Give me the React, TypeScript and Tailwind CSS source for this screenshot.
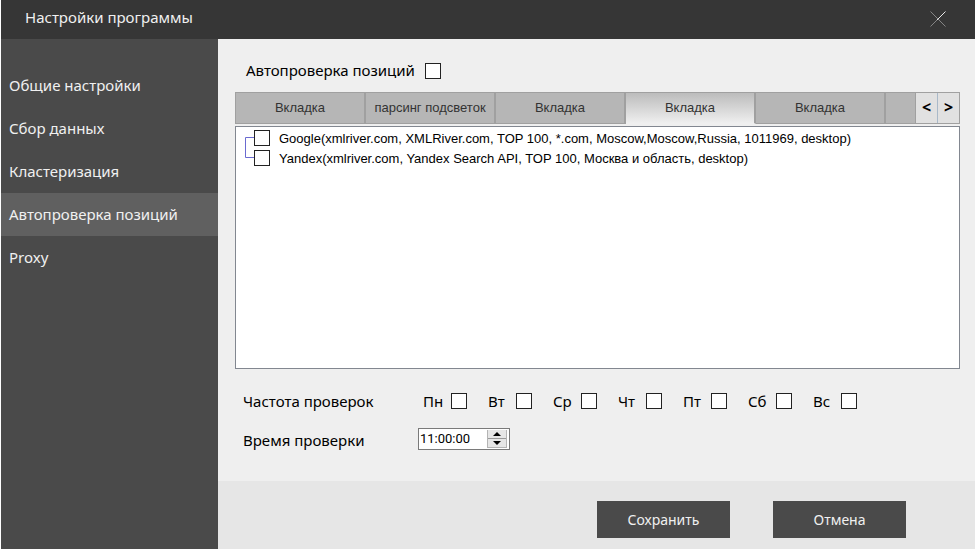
import React, { useState } from 'react';
import clsx from 'clsx';

const menu = ['Общие настройки', 'Сбор данных', 'Кластеризация', 'Автопроверка позиций', 'Proxy'];

const tabs = ['Вкладка', 'парсинг подсветок', 'Вкладка', 'Вкладка', 'Вкладка', ''];

const engines = [
  'Google(xmlriver.com, XMLRiver.com, TOP 100, *.com, Moscow,Moscow,Russia, 1011969, desktop)',
  'Yandex(xmlriver.com, Yandex Search API, TOP 100, Москва и область, desktop)',
];

const days = ['Пн', 'Вт', 'Ср', 'Чт', 'Пт', 'Сб', 'Вс'];

const Checkbox = ({ id }: { id: string }) => (
  <input
    id={id}
    type="checkbox"
    className="block h-4 w-4 shrink-0 appearance-none border border-[#222] bg-white checked:bg-[#4a4a4a] checked:shadow-[inset_0_0_0_3px_white]"
  />
);

const TitleBar = () => (
  <header className="flex h-[39px] shrink-0 items-center justify-between bg-[#363636] pr-7 pb-0.5 pl-6 text-[#f0f0f0]">
    <h1 className="pb-1 text-[15px] leading-5">Настройки программы</h1>
    <button type="button" aria-label="Закрыть" className="block">
      <svg width="18" height="18" viewBox="0 0 18 18" fill="none">
        <path d="M1.5 1.5 L16.5 16.5" stroke="#858585" />
        <path d="M1.5 16.5 L8 10" stroke="#858585" />
        <path d="M8 10 L16.5 1.5" stroke="#e8e8e8" />
      </svg>
    </button>
  </header>
);

const Sidebar = ({ active, onSelect }: { active: number; onSelect: (i: number) => void }) => (
  <nav className="w-[217px] shrink-0 bg-[#4a4a4a] pt-[25px]">
    {menu.map((item, i) => (
      <button
        key={item}
        type="button"
        onClick={() => onSelect(i)}
        className={clsx(
          'block h-[43px] w-full px-2 pb-0.5 text-left text-[15px] leading-5 text-[#f0f0f0]',
          active === i && 'bg-[#606060]'
        )}
      >
        {item}
      </button>
    ))}
  </nav>
);

const TabStrip = ({ active, onSelect }: { active: number; onSelect: (i: number) => void }) => (
  <div className="flex h-8 text-[13px] text-[#333]">
    <div role="tablist" className="flex min-w-0 flex-1 overflow-hidden border-l border-[#a0a0a0]">
      {tabs.map((tab, i) => (
        <button
          key={i}
          type="button"
          role="tab"
          aria-selected={active === i}
          onClick={() => onSelect(i)}
          className={clsx(
            "w-[130px] shrink-0 border-y border-r-2 font-['Liberation_Sans',sans-serif]",
            active === i
              ? 'border-[#a0a0a0] border-b-[#efefef] bg-linear-to-b from-[#bcbcbc] to-[#efefef]'
              : 'border-[#a0a0a0] bg-[#b6b6b6]'
          )}
        >
          {tab}
        </button>
      ))}
    </div>
    <div className="flex w-[45px] shrink-0 border border-[#a0a0a0] bg-[#e1e1e1] font-['Open_Sans',sans-serif] text-base font-bold text-black">
      <button type="button" aria-label="Назад" className="flex-1 border-r border-[#a9b9c9] pb-0.5">
        &lt;
      </button>
      <button type="button" aria-label="Вперёд" className="flex-1 pb-0.5">
        &gt;
      </button>
    </div>
  </div>
);

const EngineTree = () => (
  <div className="mt-0.5 min-h-[243px] flex-1 border border-[#828790] bg-white pt-px pl-[9px] font-['Liberation_Sans',sans-serif] text-[13px] text-black">
    <ul>
      {engines.map((name, i) => (
        <li key={name} className="flex h-5 items-center">
          {/* tree branch */}
          <svg width="9" height="20" viewBox="0 0 9 20" fill="none" stroke="#6a6ad0" className="shrink-0">
            <path d={i === 0 ? 'M9 9.5 H0.5 V20' : 'M0.5 0 V9.5 H9'} />
          </svg>
          <Checkbox id={`engine-${i}`} />
          <label htmlFor={`engine-${i}`} className="pt-px pl-[9px] leading-5 whitespace-nowrap">
            {name}
          </label>
        </li>
      ))}
    </ul>
  </div>
);

const TimeField = () => {
  const [hour, setHour] = useState(11);
  const value = `${String(hour).padStart(2, '0')}:00:00`;

  return (
    <div className="flex h-[22px] w-[92px] border border-[#7a7a7a] bg-white p-px">
      <input
        id="check-time"
        type="text"
        readOnly
        value={value}
        className="min-w-0 flex-1 bg-white font-[Roboto,sans-serif] text-[13px] text-black outline-none"
      />
      <div className="mr-px flex w-5 shrink-0 flex-col border-x border-[#b4b4b4] bg-[#e6e6e6]">
        <button
          type="button"
          aria-label="Больше"
          onClick={() => setHour((hour + 1) % 24)}
          className="flex flex-1 items-center justify-center border-b border-[#999]"
        >
          <svg width="8" height="4" viewBox="0 0 8 4">
            <path d="M4 0 L8 4 H0 Z" />
          </svg>
        </button>
        <button
          type="button"
          aria-label="Меньше"
          onClick={() => setHour((hour + 23) % 24)}
          className="flex flex-1 items-center justify-center border-b border-[#b4b4b4]"
        >
          <svg width="8" height="4" viewBox="0 0 8 4">
            <path d="M0 0 H8 L4 4 Z" />
          </svg>
        </button>
      </div>
    </div>
  );
};

export default function App() {
  const [section, setSection] = useState(3);
  const [tab, setTab] = useState(3);

  return (
    <div className="flex min-h-screen flex-col border-l border-white bg-[#efefef] font-['Noto_Sans',sans-serif]">
      <TitleBar />
      <div className="flex flex-1">
        <Sidebar active={section} onSelect={setSection} />
        <main className="flex min-w-0 flex-1 flex-col">
          <div className="flex flex-1 flex-col pt-[22px] pr-[15px] pb-[31px] pl-[17px] text-[15px] leading-5 text-black">
            <div className="mb-3 flex h-[19px] items-center gap-2.5 pl-[11px]">
              <label htmlFor="auto-check" className="pb-0.5">
                Автопроверка позиций
              </label>
              <Checkbox id="auto-check" />
            </div>

            <TabStrip active={tab} onSelect={setTab} />
            <EngineTree />

            <fieldset className="mt-[22px] flex items-center pl-2">
              <legend className="float-left w-[180px]">Частота проверок</legend>
              <div className="flex">
                {days.map((day, i) => (
                  <div key={day} className="flex w-[65px] items-center">
                    <label htmlFor={`day-${i}`} className="w-7 shrink-0">
                      {day}
                    </label>
                    <Checkbox id={`day-${i}`} />
                  </div>
                ))}
              </div>
            </fieldset>
            <div className="mt-[17px] flex items-center pl-2">
              <label htmlFor="check-time" className="w-[175px] pt-0.5">
                Время проверки
              </label>
              <TimeField />
            </div>
          </div>

          <footer className="flex h-[68px] shrink-0 items-start justify-end gap-[43px] bg-[#e6e6e6] pt-5 pr-[69px] text-sm text-[#f0f0f0]">
            <button type="button" className="h-[37px] w-[133px] bg-[#4a4a4a]">
              Сохранить
            </button>
            <button type="button" className="h-[37px] w-[133px] bg-[#4a4a4a]">
              Отмена
            </button>
          </footer>
        </main>
      </div>
    </div>
  );
}
